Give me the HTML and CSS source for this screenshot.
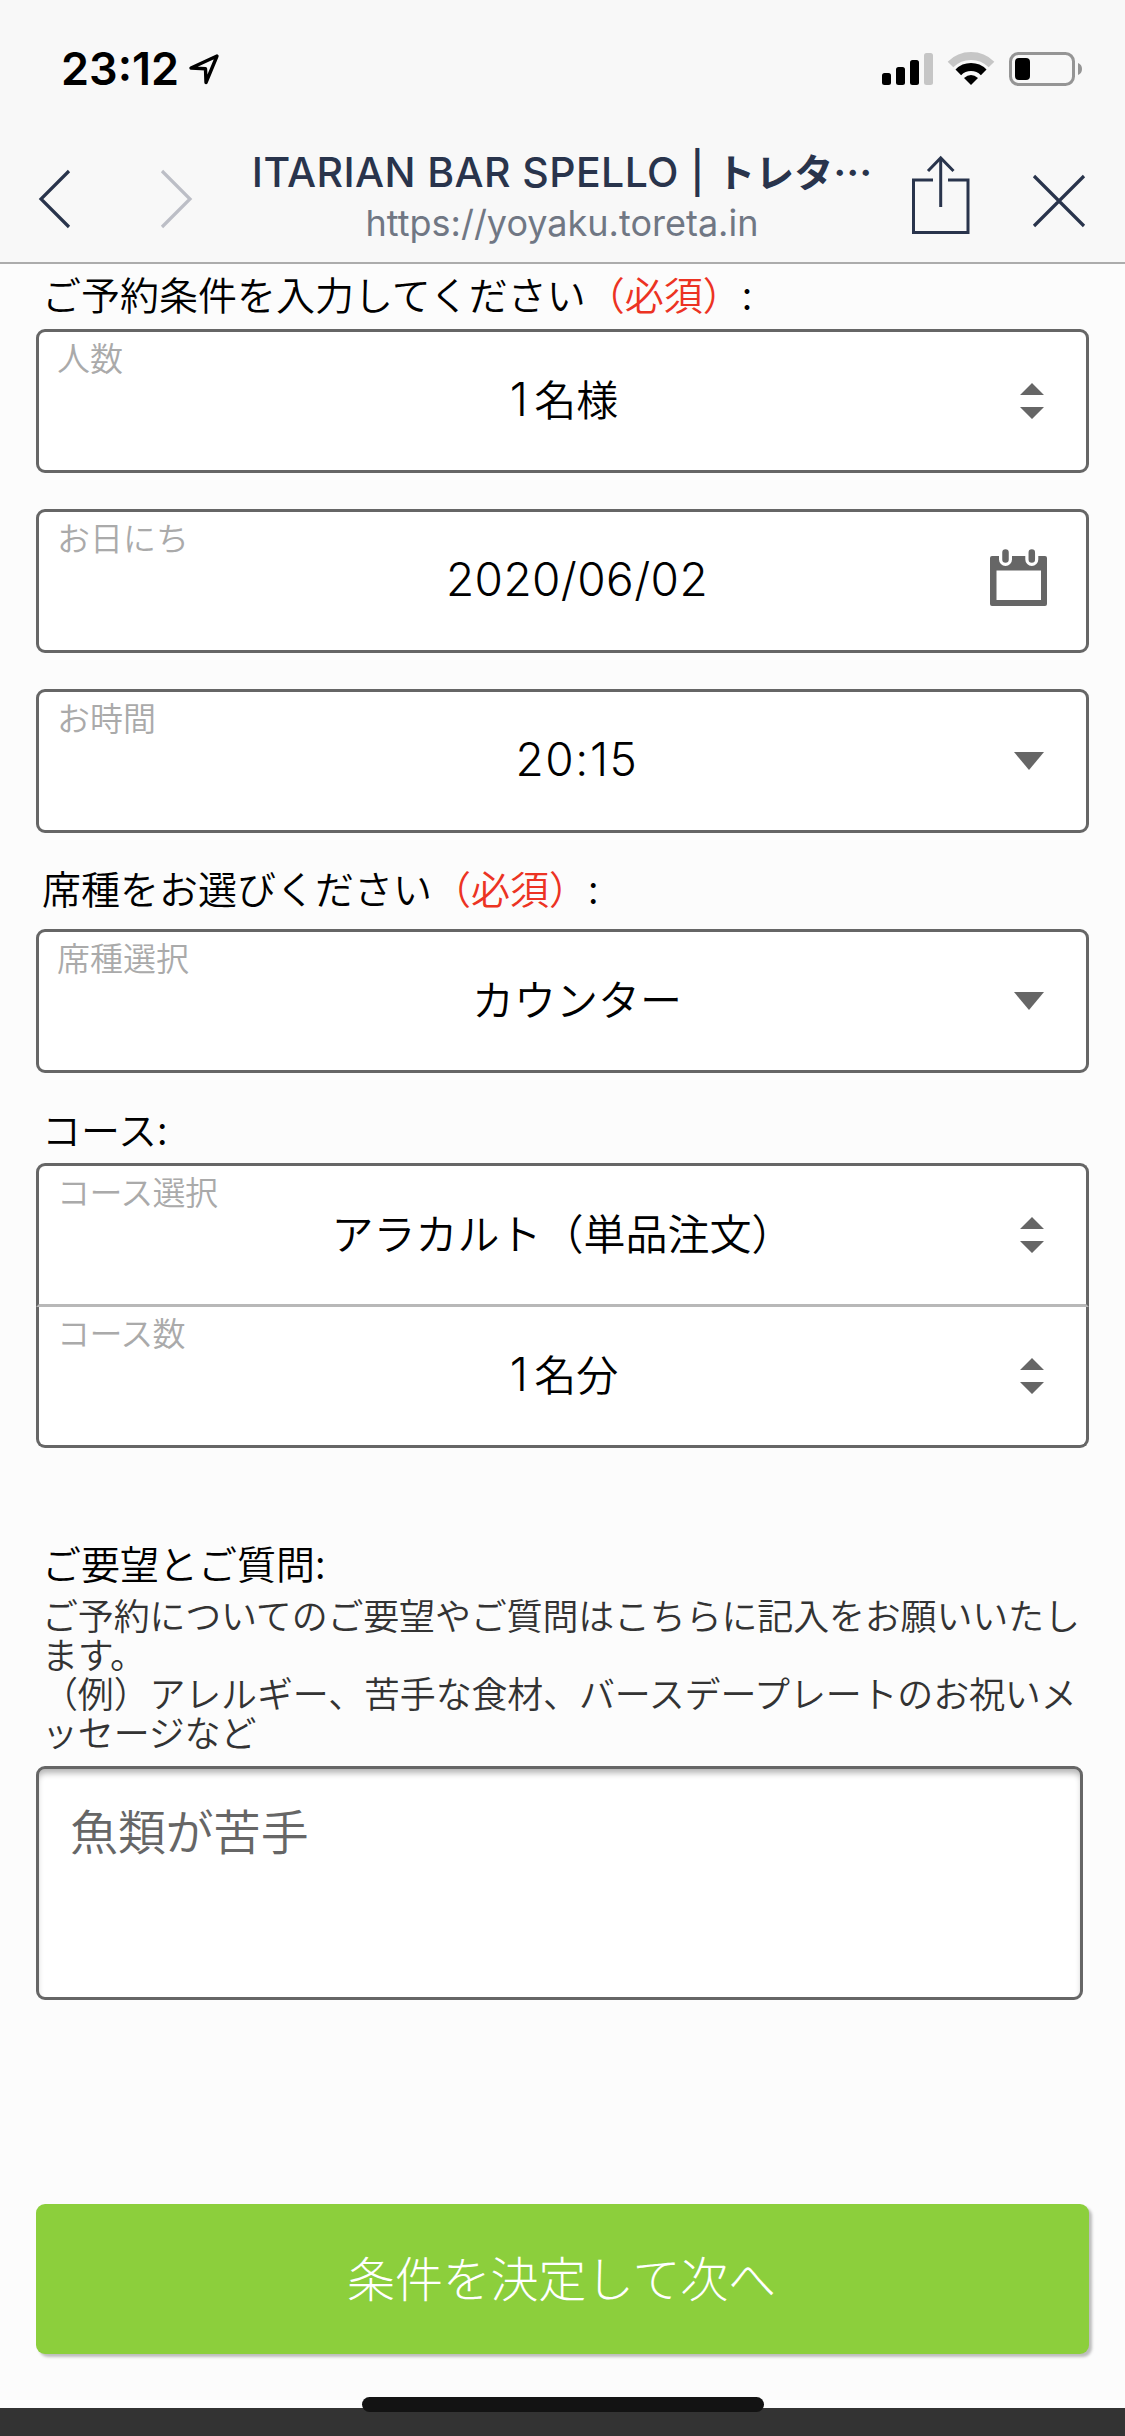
FILE: index.html
```html
<!DOCTYPE html>
<html lang="ja">
<head>
  <meta charset="UTF-8">
  <meta name="viewport" content="width=device-width, initial-scale=1.0">
  <title>ITARIAN BAR SPELLO | トレタ</title>
  <link rel="stylesheet" href="styles.css">
</head>
<body>
  <header class="header">
    <div class="status-bar">
      <div class="status-left">
        <span class="time">23:12</span>
        <svg class="location" width="32" height="32" viewBox="0 0 32 32">
          <path d="M29 3 L3 15 L17.5 15.7 L18 29.5 Z" fill="none" stroke="#000" stroke-width="3.4" stroke-linejoin="round"/>
        </svg>
      </div>
      <svg class="status-icons" width="204" height="36" viewBox="0 0 204 36">
        <!-- signal -->
        <rect x="2" y="22" width="9" height="12" rx="2.5"/>
        <rect x="16" y="16" width="9" height="18" rx="2.5"/>
        <rect x="30" y="9" width="9" height="25" rx="2.5"/>
        <rect x="44" y="2" width="9" height="32" rx="2.5" fill="#c6c6c6"/>
        <!-- wifi -->
        <path d="M70.5 13.5 A29 29 0 0 1 111.5 13.5" fill="none" stroke="#c6c6c6" stroke-width="8"/>
        <path d="M78.3 21.3 A18 18 0 0 1 103.7 21.3" fill="none" stroke="#000" stroke-width="8"/>
        <path d="M91 34 L84 27 Q91 21 98 27 Z"/>
        <!-- battery -->
        <rect x="130.5" y="2.5" width="63" height="31" rx="8" fill="none" stroke="#959595" stroke-width="3"/>
        <rect x="135" y="7" width="15" height="22" rx="4"/>
        <path d="M198 12 Q202 13.5 202 18 Q202 22.5 198 24 Z" fill="#959595"/>
      </svg>
    </div>
    <div class="nav-bar">
      <div class="nav-arrows">
        <svg width="34" height="62" viewBox="0 0 34 62">
          <path d="M31 3 L3 31 L31 59" fill="none" stroke="#29344c" stroke-width="3.2"/>
        </svg>
        <svg width="34" height="62" viewBox="0 0 34 62">
          <path d="M3 3 L31 31 L3 59" fill="none" stroke="#bcbec6" stroke-width="3.2"/>
        </svg>
      </div>
      <div class="page-info">
        <div class="page-title">ITARIAN BAR SPELLO | <span class="kana">トレタ…</span></div>
        <div class="page-url">https://yoyaku.toreta.in</div>
      </div>
      <div class="nav-actions">
        <svg width="58" height="80" viewBox="0 0 58 80" fill="none" stroke="#29344c" stroke-width="3">
          <path d="M21 25 H1.5 V77.5 H56 V25 H36"/>
          <path d="M28.7 52 V4"/>
          <path d="M16 16 L28.7 3 L41.5 16"/>
        </svg>
        <svg class="close" width="54" height="54" viewBox="0 0 54 54" fill="none" stroke="#29344c" stroke-width="3.2">
          <path d="M2 2 L52 52 M52 2 L2 52"/>
        </svg>
      </div>
    </div>
  </header>

  <main class="form">
    <h2 class="section-label">ご予約条件を入力してください<span class="required">（必須）</span>:</h2>
    <div class="field">
      <span class="field-label">人数</span>
      <span class="field-value"><span class="num count">1</span>名様</span>
      <svg class="field-icon" width="24" height="36" viewBox="0 0 24 36" fill="#666">
        <path d="M12 0 L24 12 H0 Z M0 24 H24 L12 36 Z"/>
      </svg>
    </div>
    <div class="field field-spaced">
      <span class="field-label">お日にち</span>
      <span class="field-value offset"><span class="num">2020/06/02</span></span>
      <svg class="field-icon calendar" width="57" height="57" viewBox="0 0 57 57">
        <path d="M2 7 H55 Q57 7 57 9 V55 Q57 57 55 57 H2 Q0 57 0 55 V9 Q0 7 2 7 Z M6.5 21.5 V51 H51 V21.5 Z" fill="#666" fill-rule="evenodd"/>
        <path d="M15.5 3.5 V10.5 M41.8 3.5 V10.5" stroke="#fff" stroke-width="13" stroke-linecap="round"/>
        <path d="M15.5 3.5 V10.5 M41.8 3.5 V10.5" stroke="#666" stroke-width="6.5" stroke-linecap="round"/>
      </svg>
    </div>
    <div class="field field-spaced">
      <span class="field-label">お時間</span>
      <span class="field-value offset"><span class="num clock">20:15</span></span>
      <svg class="field-icon" width="30" height="18" viewBox="0 0 30 18" fill="#666">
        <path d="M0 0 H30 L15 18 Z"/>
      </svg>
    </div>

    <h2 class="section-label seat-label">席種をお選びください<span class="required">（必須）</span>:</h2>
    <div class="field">
      <span class="field-label">席種選択</span>
      <span class="field-value offset">カウンター</span>
      <svg class="field-icon" width="30" height="18" viewBox="0 0 30 18" fill="#666">
        <path d="M0 0 H30 L15 18 Z"/>
      </svg>
    </div>

    <h2 class="section-label course-label">コース:</h2>
    <div class="field field-first">
      <span class="field-label tight">コース選択</span>
      <span class="field-value">アラカルト（単品注文）</span>
      <svg class="field-icon" width="24" height="36" viewBox="0 0 24 36" fill="#666">
        <path d="M12 0 L24 12 H0 Z M0 24 H24 L12 36 Z"/>
      </svg>
    </div>
    <div class="field field-last">
      <span class="field-label tight">コース数</span>
      <span class="field-value"><span class="num count">1</span>名分</span>
      <svg class="field-icon" width="24" height="36" viewBox="0 0 24 36" fill="#666">
        <path d="M12 0 L24 12 H0 Z M0 24 H24 L12 36 Z"/>
      </svg>
    </div>

    <h2 class="section-label request-label">ご要望とご質問:</h2>
    <p class="help">ご予約についてのご要望やご質問はこちらに記入をお願いいたし<br>ます。<br>（例）アレルギー、苦手な食材、バースデープレートのお祝いメ<br>ッセージなど</p>
    <textarea class="request">魚類が苦手</textarea>

    <button class="submit">条件を決定して次へ</button>
  </main>

  <footer class="footer">
    <div class="home-indicator"></div>
  </footer>
</body>
</html>
```
FILE: styles.css
```css
* {
  box-sizing: border-box;
}

body {
  margin: 0;
  background: #fcfcfc;
  color: #000;
  font-family: "Noto Sans CJK JP", sans-serif;
  font-weight: 350;
  height: 2436px;
  display: flex;
  flex-direction: column;
  overflow: hidden;
}

svg {
  display: block;
  flex-shrink: 0;
}

/* header */
.header {
  height: 264px;
  background: #f8f8f8;
  border-bottom: 2px solid #acacac;
  font-family: Inter, "Noto Sans CJK JP", sans-serif;
}

.status-bar {
  height: 138px;
  padding: 0 41px 0 61px;
  display: flex;
  justify-content: space-between;
  align-items: center;
}

.status-left {
  display: flex;
  align-items: center;
  gap: 9px;
}

.time {
  font-size: 45px;
  font-weight: 600;
  line-height: 54px;
}

.nav-bar {
  height: 124px;
  padding: 0 39px 0 38px;
  display: flex;
}

.nav-arrows {
  display: flex;
  gap: 87px;
  padding-top: 30px;
}

.page-info {
  flex: 1;
  padding: 8px 18px 0 0;
  margin-left: 37px;
  text-align: center;
  white-space: nowrap;
}

.page-title {
  font-size: 41px;
  font-weight: 500;
  line-height: 52px;
  letter-spacing: 0.4px;
  color: #29344c;
}

.page-title .kana {
  font-family: "Noto Sans CJK JP", sans-serif;
  font-size: 39px;
  font-weight: 700;
  line-height: 1;
  letter-spacing: 0;
}

.page-url {
  font-size: 36px;
  font-weight: 400;
  line-height: 50px;
  color: #707784;
}

.nav-actions {
  display: flex;
  gap: 62px;
  padding-top: 17px;
}

.close {
  margin-top: 19px;
}

/* form */
.form {
  flex: 1;
  padding: 10px 36px 0;
}

.section-label {
  margin: 0 0 16px;
  padding-left: 6px;
  font-size: 39px;
  font-weight: 350;
  line-height: 39px;
}

.required {
  color: #ec3323;
}

.seat-label {
  margin: 35px 0 22px;
}

.course-label {
  margin: 36px 0 15px;
}

.request-label {
  margin: 95px 0 13px;
}

.field {
  position: relative;
  height: 144px;
  background: #fff;
  border: 3px solid #666;
  border-radius: 9px;
  display: flex;
  align-items: center;
  justify-content: center;
}

.field-spaced {
  margin-top: 36px;
}

.field-first {
  border-bottom-color: #b8b8b8;
  border-radius: 9px 9px 0 0;
}

.field-last {
  height: 141px;
  border-top: 0;
  border-radius: 0 0 9px 9px;
}

.field-label {
  position: absolute;
  top: 9px;
  left: 18px;
  font-size: 33px;
  line-height: 33px;
  color: #aaa;
}

.field-label.tight {
  letter-spacing: -0.6px;
}

.field-value {
  font-size: 42px;
  line-height: 48px;
  padding-bottom: 6px;
}

.field-value.offset {
  padding-left: 29px;
}

.num {
  font-family: Inter, sans-serif;
  font-size: 46px;
  font-weight: 300;
  letter-spacing: 0.4px;
}

.num.clock {
  letter-spacing: 1.6px;
}

.num.count {
  padding: 0 6px 0 3px;
}

.field-icon {
  position: absolute;
  right: 42px;
}

.field-icon.calendar {
  right: 39px;
  top: 37px;
}

.help {
  margin: 0 0 15px;
  padding-left: 6px;
  font-size: 36px;
  line-height: 39px;
  letter-spacing: -0.18px;
  color: #333;
  white-space: nowrap;
}

.request {
  display: block;
  width: 1047px;
  height: 234px;
  margin: 0;
  padding: 33px 31px;
  border: 3px solid #666;
  border-radius: 9px;
  background: #fff;
  box-shadow: inset 0 6px 6px -2px rgba(0, 0, 0, 0.3);
  color: #666;
  font-family: inherit;
  font-size: 48px;
  font-weight: 350;
  line-height: 54px;
  letter-spacing: -0.3px;
  resize: none;
}

.submit {
  display: block;
  width: 100%;
  height: 150px;
  margin-top: 204px;
  padding: 0 2px 6px 0;
  border: none;
  border-radius: 9px;
  background: #8ccf3c;
  box-shadow: 3px 3px 3px rgba(0, 0, 0, 0.25);
  color: #fff;
  font-family: inherit;
  font-size: 48px;
  font-weight: 300;
  letter-spacing: -0.2px;
}

/* bottom strip */
.footer {
  position: relative;
  height: 28px;
  background: #333;
}

.home-indicator {
  position: absolute;
  left: 362px;
  top: -11px;
  width: 402px;
  height: 15px;
  border-radius: 8px;
  background: #131313;
}
```
